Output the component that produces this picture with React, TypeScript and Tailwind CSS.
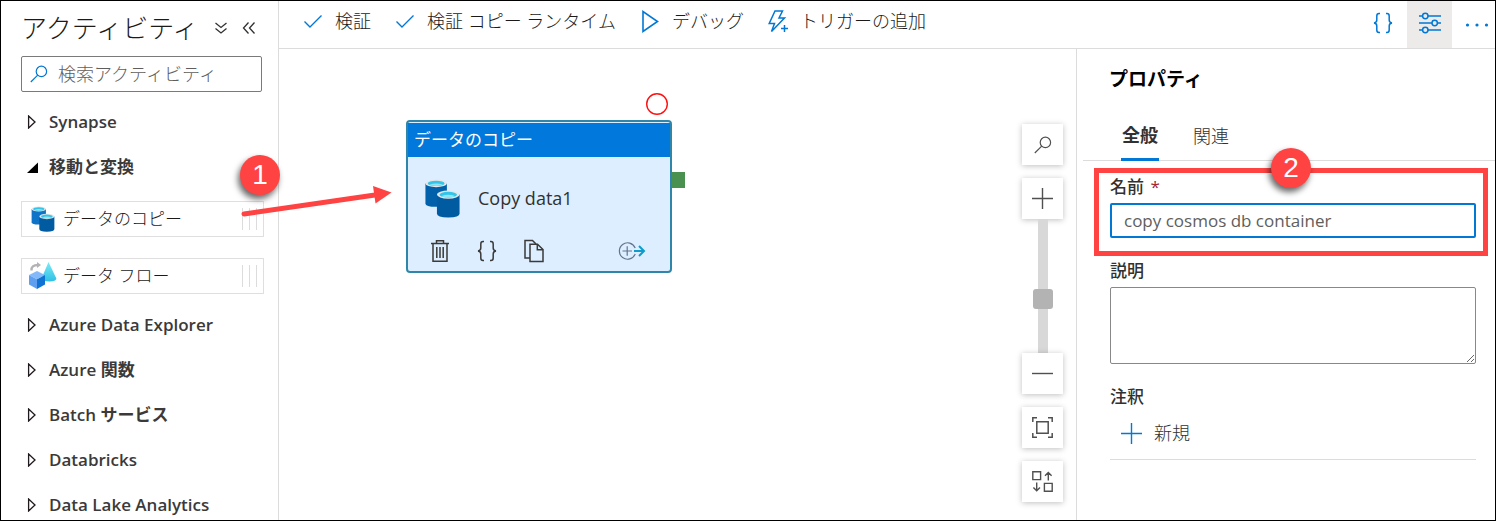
import React from "react";

const stroke = { fill: "none", stroke: "currentColor" } as const;

function CheckIcon() {
  return (
    <svg width="20" height="20" viewBox="0 0 20 20" {...stroke} strokeWidth="1.4" className="text-[#0078d4]" aria-hidden="true">
      <path d="M1.5 10.5 L7 16 L18.5 4.5" />
    </svg>
  );
}

function PlayIcon() {
  return (
    <svg width="20" height="24" viewBox="0 0 20 24" {...stroke} strokeWidth="1.6" className="text-[#0078d4]" aria-hidden="true">
      <path d="M3 2.6 V22.4 L17.5 12.5 Z" />
    </svg>
  );
}

function BoltIcon() {
  return (
    <svg width="20" height="24" viewBox="0 0 20 24" {...stroke} strokeWidth="1.5" className="text-[#0078d4]" aria-hidden="true">
      <path d="M7 2 H14.5 L11 9 H16.5 L3.5 22.5 L6.5 14.5 H1.2 Z M13 19.5 h7 M16.5 16 v7" />
    </svg>
  );
}

function BracesIcon({ className }: { className?: string }) {
  return (
    <svg width="20" height="22" viewBox="0 0 20 22" {...stroke} strokeWidth="1.5" className={className} aria-hidden="true">
      <path d="M7 1.5 H6 Q3.8 1.5 3.8 4 V8 Q3.8 10.7 1 11 Q3.8 11.3 3.8 14 V18 Q3.8 20.5 6 20.5 H7" />
      <path d="M13 1.5 H14 Q16.2 1.5 16.2 4 V8 Q16.2 10.7 19 11 Q16.2 11.3 16.2 14 V18 Q16.2 20.5 14 20.5 H13" />
    </svg>
  );
}

function SlidersIcon() {
  return (
    <svg width="22" height="22" viewBox="0 0 22 22" {...stroke} strokeWidth="1.5" aria-hidden="true">
      <path d="M0 4 H3.5 M9 4 H22 M0 11 H13 M18.5 11 H22 M0 18 H3.5 M9 18 H22" />
      <circle cx="6.3" cy="4" r="2.7" />
      <circle cx="15.7" cy="11" r="2.7" />
      <circle cx="6.3" cy="18" r="2.7" />
    </svg>
  );
}

function SearchIcon({ className }: { className?: string }) {
  return (
    <svg width="18" height="18" viewBox="0 0 18 18" {...stroke} strokeWidth="1.2" className={className} aria-hidden="true">
      <circle cx="11.4" cy="6.4" r="5.2" />
      <path d="M7.7 10.1 L0.8 17" />
    </svg>
  );
}

function Cylinders({ size, light }: { size: number; light?: boolean }) {
  const body = light ? "#0f73c8" : "#0060a9";
  return (
    <svg width={size} height={size} viewBox="0 0 36 40" aria-hidden="true">
      <path d="M0.5 4.5 V25 Q0.5 28.5 11.5 28.5 Q22.5 28.5 22.5 25 V4.5 Z" fill={body} />
      <ellipse cx="11.5" cy="4.5" rx="11" ry="3.9" fill="#e6e6e6" />
      <ellipse cx="11.5" cy="4.6" rx="8.6" ry="2.7" fill="#32c5e9" />
      <path d="M4.5 6 Q11.5 3.4 18.5 6 Q11.5 8.2 4.5 6 Z" fill="#8de6f5" />
      <path d="M12.3 16 V35.5 Q12.3 39.5 23.9 39.5 Q35.5 39.5 35.5 35.5 V16 Z" fill="#005ba1" />
      <ellipse cx="23.9" cy="16" rx="11.6" ry="4.2" fill="#e6e6e6" />
      <ellipse cx="23.9" cy="16.1" rx="9" ry="2.9" fill="#32c5e9" />
      <path d="M16.5 17.6 Q23.9 14.8 31.3 17.6 Q23.9 20 16.5 17.6 Z" fill="#8de6f5" />
    </svg>
  );
}

function DataFlowIcon() {
  return (
    <svg width="29" height="28" viewBox="0 0 29 28" aria-hidden="true">
      <defs>
        <linearGradient id="cone" x1="0" y1="0" x2="0" y2="1">
          <stop offset="0" stopColor="#7deaf6" />
          <stop offset="1" stopColor="#2fc0e6" />
        </linearGradient>
      </defs>
      <path d="M20.5 0 L28.4 16.5 Q28 19.5 21.5 19.5 Q14.5 19.5 13.5 16.5 Z" fill="url(#cone)" />
      <path d="M1 13 L9 9 L17 13 L9 17.3 Z" fill="#83b9f9" />
      <path d="M1 13 L9 17.3 V27 L1 22.5 Z" fill="#5ea0ef" />
      <path d="M17 13 L9 17.3 V27 L17 22.5 Z" fill="#0f73d4" />
      <path d="M3.5 8.5 Q3 3 10 3" fill="none" stroke="#b3b3b3" strokeWidth="2.4" />
      <path d="M9 0 L13 3 L9 6 Z" fill="#b3b3b3" />
    </svg>
  );
}

function TrashIcon() {
  return (
    <svg width="20" height="24" viewBox="0 0 20 24" {...stroke} strokeWidth="1.5" aria-hidden="true">
      <path d="M1 4.5 H19 M6.5 4.5 V1.8 H13.5 V4.5 M3 4.5 V22.3 H17 V4.5 M6.8 8 V19 M10 8 V19 M13.2 8 V19" />
    </svg>
  );
}

function CopyIcon() {
  return (
    <svg width="20" height="24" viewBox="0 0 20 24" {...stroke} strokeWidth="1.5" aria-hidden="true">
      <path d="M6 19 H1 V1.5 H8.5 L12 5" />
      <path d="M6 5.2 H13.5 L19 10.5 V22.5 H6 Z M13.3 5.2 V10.7 H19" />
    </svg>
  );
}

function AddOutputIcon() {
  return (
    <svg width="28" height="20" viewBox="0 0 28 20" fill="none" aria-hidden="true">
      <path d="M17.2 7 A8.2 8.2 0 1 0 17.2 13" stroke="#64748c" strokeWidth="1.2" />
      <path d="M4.5 10 H14 M9.2 5.3 V14.7" stroke="#64748c" strokeWidth="1.2" />
      <path d="M16 10 H26 M21 5 L26 10 L21 15" stroke="#0f9bcb" strokeWidth="2" />
    </svg>
  );
}

function PlusIcon({ className }: { className?: string }) {
  return (
    <svg width="21" height="21" viewBox="0 0 21 21" {...stroke} strokeWidth="1.4" className={className} aria-hidden="true">
      <path d="M0 10.5 H21 M10.5 0 V21" />
    </svg>
  );
}

function Category({ label, open }: { label: string; open?: boolean }) {
  return (
    <li>
      <button type="button" aria-expanded={!!open} className="flex h-[45px] w-full items-center gap-[11px] pl-1.5 text-left text-[17px] leading-6 font-semibold text-[#3b3a39]">
        <svg width="11" height="14" viewBox="0 0 11 14" aria-hidden="true">
          {open ? (
            <path d="M0 13 L11 2.5 V13 Z" fill="#000" />
          ) : (
            <path d="M1.6 1 V13 L8 7 Z" fill="none" stroke="#201a1e" strokeWidth="1.3" />
          )}
        </svg>
        <span>{label}</span>
      </button>
    </li>
  );
}

function Activity({ label, icon }: { label: string; icon: React.ReactNode }) {
  return (
    <li className="flex h-9 items-center justify-between border border-[#dfdfdf] pr-1.5 pl-1.5">
      <button type="button" className="flex items-center gap-1.5 text-[17px] leading-6 font-light text-[#1b1a19]">
        <span className="flex w-[29px] justify-center">{icon}</span>
        {label}
      </button>
      <span className="flex gap-1.5" aria-hidden="true">
        <span className="h-[22px] w-px bg-[#dcdcdc]" />
        <span className="h-[22px] w-px bg-[#dcdcdc]" />
        <span className="h-[22px] w-px bg-[#dcdcdc]" />
      </span>
    </li>
  );
}

function Sidebar() {
  return (
    <aside className="flex w-[278px] shrink-0 flex-col overflow-hidden border-r border-[#dcdcdc] pr-3.5 pl-5">
      <header className="flex h-[55px] shrink-0 items-center justify-between pr-2 pb-0.5">
        <h1 className="text-[26px] leading-9 font-light whitespace-nowrap text-[#1b1a19]">アクティビティ</h1>
        <div className="flex gap-3.5 text-[#323130]">
          <button type="button" aria-label="すべて展開">
            <svg width="14" height="14" viewBox="0 0 14 14" {...stroke} strokeWidth="1.3">
              <path d="M1.5 2 L7 6.5 L12.5 2 M1.5 7.5 L7 12 L12.5 7.5" />
            </svg>
          </button>
          <button type="button" aria-label="折りたたむ">
            <svg width="14" height="14" viewBox="0 0 14 14" {...stroke} strokeWidth="1.3">
              <path d="M6.5 1.5 L1.5 7 L6.5 12.5 M12.5 1.5 L7.5 7 L12.5 12.5" />
            </svg>
          </button>
        </div>
      </header>
      <label className="mr-0.5 flex h-9 shrink-0 items-center gap-2.5 rounded-xs border border-[#7a7a7a] px-2">
        <SearchIcon className="text-[#0078d4]" />
        <input type="search" aria-label="検索アクティビティ" placeholder="検索アクティビティ" className="min-w-0 flex-1 text-lg font-light outline-none placeholder:text-[#605e5c]" />
      </label>
      <ul className="mt-[7px]">
        <Category label="Synapse" />
        <Category label="移動と変換" open />
      </ul>
      <ul className="mt-3 flex flex-col gap-[21px]">
        <Activity label="データのコピー" icon={<Cylinders size={26} light />} />
        <Activity label="データ フロー" icon={<DataFlowIcon />} />
      </ul>
      <ul className="mt-2">
        <Category label="Azure Data Explorer" />
        <Category label="Azure 関数" />
        <Category label="Batch サービス" />
        <Category label="Databricks" />
        <Category label="Data Lake Analytics" />
      </ul>
    </aside>
  );
}

function ToolbarButton({ icon, label }: { icon: React.ReactNode; label: string }) {
  return (
    <button type="button" className="flex items-center gap-3 whitespace-nowrap">
      {icon}
      {label}
    </button>
  );
}

function Toolbar() {
  return (
    <div className="flex h-12 shrink-0 justify-between border-b border-[#dcdcdc] pl-6">
      <div className="flex items-center gap-6 pb-2 text-lg font-light text-[#1b1a19]">
        <ToolbarButton icon={<CheckIcon />} label="検証" />
        <ToolbarButton icon={<CheckIcon />} label="検証 コピー ランタイム" />
        <ToolbarButton icon={<PlayIcon />} label="デバッグ" />
        <ToolbarButton icon={<BoltIcon />} label="トリガーの追加" />
      </div>
      <div className="flex text-[#0078d4]">
        <button type="button" aria-label="コード" className="flex w-12 items-center justify-center pb-1">
          <BracesIcon />
        </button>
        <button type="button" aria-label="プロパティ" className="flex w-[45px] items-center justify-center bg-[#edebe9] pb-1">
          <SlidersIcon />
        </button>
        <button type="button" aria-label="その他" className="flex w-[43px] items-center justify-center pl-1.5">
          <svg width="24" height="4" viewBox="0 0 24 4" fill="currentColor">
            <circle cx="2.5" cy="2" r="1.6" />
            <circle cx="12" cy="2" r="1.6" />
            <circle cx="21.5" cy="2" r="1.6" />
          </svg>
        </button>
      </div>
    </div>
  );
}

function CopyNode() {
  return (
    <div className="absolute top-[71px] left-[127px] w-[266px] rounded-sm border-2 border-[#2f86a8] bg-[#dceeff]">
      <div className="mt-px flex h-[34px] items-center bg-[#0078dc] px-1.5 text-[17px] leading-6 text-white">データのコピー</div>
      <div className="flex h-[82px] items-center gap-4 px-[15px] text-lg text-[#323130]">
        <Cylinders size={39} />
        <span>Copy data1</span>
      </div>
      <div className="flex h-8 items-start pr-6 pl-[22px] text-[#3b3a39]">
        <div className="flex flex-1 gap-[27px]">
          <button type="button" aria-label="削除"><TrashIcon /></button>
          <button type="button" aria-label="コード"><BracesIcon /></button>
          <button type="button" aria-label="複製"><CopyIcon /></button>
        </div>
        <button type="button" aria-label="出力の追加" className="mt-0.5"><AddOutputIcon /></button>
      </div>
      <span className="absolute top-[50px] -right-[15px] h-4 w-[13px] bg-[#4a9150]" />
      <svg width="24" height="24" viewBox="0 0 24 24" className="absolute -top-[30px] right-px" aria-hidden="true">
        <circle cx="12" cy="12" r="10.3" fill="#fff" stroke="#ff1010" strokeWidth="1.4" />
      </svg>
    </div>
  );
}

function ZoomButton({ label, children }: { label: string; children: React.ReactNode }) {
  return (
    <button type="button" aria-label={label} className="flex size-[41px] items-center justify-center bg-white text-[#505050] shadow-[0_1px_6px_rgba(0,0,0,0.25)]">
      {children}
    </button>
  );
}

function ZoomControls() {
  return (
    <div className="absolute top-[75px] right-[13px] flex flex-col gap-[13px]">
      <ZoomButton label="検索"><SearchIcon /></ZoomButton>
      <div className="flex flex-col items-center">
        <ZoomButton label="拡大"><PlusIcon /></ZoomButton>
        <input
          type="range"
          aria-label="ズーム"
          defaultValue={39}
          className="h-[134px] w-5 appearance-none bg-transparent [direction:rtl] [writing-mode:vertical-lr] [background-image:linear-gradient(to_right,transparent_5px,#d8d8d8_5px,#d8d8d8_15px,transparent_15px)] [&::-webkit-slider-thumb]:size-5 [&::-webkit-slider-thumb]:appearance-none [&::-webkit-slider-thumb]:rounded-[3px] [&::-webkit-slider-thumb]:bg-[#b3b3b3]"
        />
        <ZoomButton label="縮小">
          <svg width="21" height="21" viewBox="0 0 21 21" {...stroke} strokeWidth="1.4"><path d="M0 10.5 H21" /></svg>
        </ZoomButton>
      </div>
      <ZoomButton label="画面に合わせる">
        <svg width="21" height="21" viewBox="0 0 21 21" {...stroke} strokeWidth="1.5">
          <path d="M4.8 4.8 H16.2 V16.2 H4.8 Z M0.8 5 V0.8 H5 M16 0.8 H20.2 V5 M20.2 16 V20.2 H16 M5 20.2 H0.8 V16" />
        </svg>
      </ZoomButton>
      <ZoomButton label="自動整列">
        <svg width="21" height="21" viewBox="0 0 21 21" {...stroke} strokeWidth="1.4">
          <path d="M0.8 0.8 H8.6 V8.6 H0.8 Z M12.4 12.4 H20.2 V20.2 H12.4 Z M16.3 9.5 V1.5 M13 4.8 L16.3 1.5 L19.6 4.8 M4.7 11.5 V19.8 M1.4 16.5 L4.7 19.8 L8 16.5" />
        </svg>
      </ZoomButton>
    </div>
  );
}

function Marker({ n, className }: { n: number; className: string }) {
  return (
    <span className={"absolute z-20 flex size-10 items-center justify-center rounded-full bg-[#ff4343] font-['Liberation_Sans',sans-serif] text-[28px] leading-none text-white shadow-[-2px_4px_6px_rgba(0,0,0,0.6)] " + className}>
      {n}
    </span>
  );
}

function Properties() {
  return (
    <section className="flex w-[419px] shrink-0 flex-col border-l border-[#dcdcdc]">
      <h2 className="mt-4 pl-8 text-[19px] leading-7 font-bold text-black">プロパティ</h2>
      <div role="tablist" className="mt-7 ml-1.5 flex gap-[34px] border-b border-[#dcdcdc] pl-[38px] text-lg leading-7 text-[#323130]">
        <button type="button" role="tab" aria-selected="true" className="-mb-px border-b-3 border-[#0078d4] px-px pb-[9px] font-semibold">全般</button>
        <button type="button" role="tab" aria-selected="false" className="pb-[9px] font-light">関連</button>
      </div>
      <form className="flex flex-col pr-[19px] pl-[33px] text-[#323130]">
        <div className="relative flex flex-col pt-3.5">
          <label htmlFor="name" className="text-[17px] leading-6 font-medium">
            名前 <span className="ml-0.5 text-[#a4262c]">*</span>
          </label>
          <input id="name" type="text" defaultValue="copy cosmos db container" className="mt-1 h-[35px] rounded-xs border-2 border-[#0078d4] px-3 text-[17px] text-[#605e5c] outline-none" />
          <div className="pointer-events-none absolute top-[7px] -right-3 -bottom-[18px] -left-4 border-5 border-[#ff4343]" />
          <Marker n={2} className="-top-[13px] left-[161px]" />
        </div>
        <label htmlFor="description" className="mt-[21px] text-[17px] leading-6 font-medium">説明</label>
        <textarea id="description" className="mt-1 h-[77px] resize-y rounded-xs border border-[#8a8886] p-2 outline-none" />
        <h3 className="mt-[21px] text-[17px] leading-6 font-medium">注釈</h3>
        <button type="button" className="flex h-[51px] items-center gap-3 border-b border-[#dcdcdc] pb-0.5 pl-[11px] text-lg font-light">
          <PlusIcon className="text-[#0078d4]" />
          新規
        </button>
      </form>
    </section>
  );
}

export default function App() {
  return (
    <div lang="ja" className="relative flex h-screen overflow-hidden border border-black bg-white font-['Open_Sans','Noto_Sans_CJK_JP',sans-serif]">
      <Sidebar />
      <main className="flex min-w-0 flex-1 flex-col">
        <Toolbar />
        <div className="flex min-h-0 flex-1">
          <div className="relative min-w-0 flex-1">
            <CopyNode />
            <ZoomControls />
          </div>
          <Properties />
        </div>
      </main>
      <svg width="152" height="36" viewBox="0 0 152 36" className="pointer-events-none absolute top-[183px] left-[240px]" aria-hidden="true">
        <path d="M3 30 L134 11" stroke="#ff4343" strokeWidth="5" strokeLinecap="round" />
        <path d="M132 2 L150.5 8.5 L134.5 19.5 Z" fill="#ff4343" />
      </svg>
      <Marker n={1} className="top-[154px] left-[239px]" />
    </div>
  );
}
